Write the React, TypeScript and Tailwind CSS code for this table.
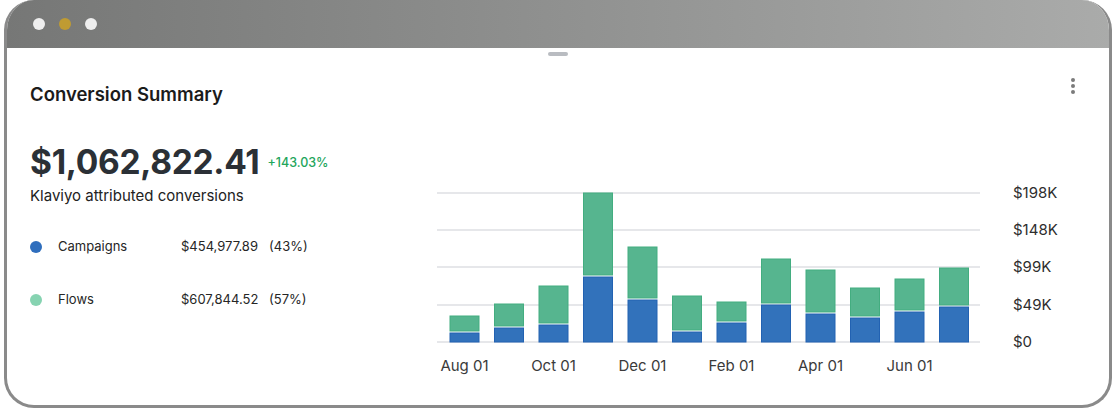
const bars = [
  { g: 135, b: 152 },
  { g: 123, b: 147 },
  { g: 105, b: 144 },
  { g: 12, b: 96 },
  { g: 66, b: 119 },
  { g: 115, b: 151 },
  { g: 121, b: 142 },
  { g: 78, b: 124 },
  { g: 89, b: 133 },
  { g: 107, b: 137 },
  { g: 98, b: 131 },
  { g: 87, b: 126 },
];

const grid = [12, 49, 86, 124, 161];
const yLabels = ["$198K", "$148K", "$99K", "$49K", "$0"];
const xLabels = ["Aug 01", "Oct 01", "Dec 01", "Feb 01", "Apr 01", "Jun 01"];

const BASE = 161;

function Chart() {
  return (
    <svg width="640" height="200" viewBox="0 0 640 200" className="block">
      {grid.map((y) => (
        <line key={y} x1="0" x2="543" y1={y} y2={y} stroke="#cdd0d5" strokeWidth="1.2" />
      ))}
      {bars.map((bar, i) => {
        const x = 13 + i * 44.5;
        return (
          <g key={i}>
            <rect x={x} y={bar.g} width="29" height={bar.b - 2 - bar.g} fill="#56b58f" stroke="#43ad80" strokeWidth="1" />
            <rect x={x} y={bar.b} width="29" height={BASE - bar.b} fill="#3272bb" stroke="#2262b2" strokeWidth="1" />
          </g>
        );
      })}
      {yLabels.map((t, i) => (
        <text key={t} x="576" y={grid[i] + 5} fontSize="15" fill="#2e2e2e" fontFamily="Inter, sans-serif">
          {t}
        </text>
      ))}
      {xLabels.map((t, i) => (
        <text key={t} x={27.5 + i * 89} y="190" fontSize="15" fill="#3a3a3a" textAnchor="middle" fontFamily="Inter, sans-serif">
          {t}
        </text>
      ))}
    </svg>
  );
}

function LegendRow({ color, label, amount, pct }: { color: string; label: string; amount: string; pct: string }) {
  return (
    <div className="flex items-center h-[20px] text-[13px] text-[#262626]">
      <span className={`w-[12px] h-[12px] rounded-full ${color}`} />
      <span className="ml-[16px] w-[123px]">{label}</span>
      <span className="w-[88px]">{amount}</span>
      <span>{pct}</span>
    </div>
  );
}

export default function App() {
  return (
    <div className="w-[1114px] h-[410px] bg-white" style={{ fontFamily: "Inter, 'Noto Sans', sans-serif" }}>
      <div className="ml-[4px] w-[1108px] h-[408px] rounded-[30px] border-[3px] border-t-0 border-[#8a8a8a] overflow-hidden flex flex-col bg-white">
        {/* Window bar */}
        <div className="h-[48px] -mx-[3px] bg-gradient-to-r from-[#767776] to-[#aaabaa] flex items-center pl-[29px] gap-[14px] shrink-0">
          <span className="w-[12px] h-[12px] rounded-full bg-[#eeeeee]" />
          <span className="w-[12px] h-[12px] rounded-full bg-[#bf9b32]" />
          <span className="w-[12px] h-[12px] rounded-full bg-[#eeeeee]" />
        </div>

        <div className="flex justify-center pt-[4px]">
          <div className="w-[20px] h-[4px] rounded-full bg-[#b9bcc1]" />
        </div>

        {/* Header */}
        <div className="flex items-start justify-between pl-[23px] pr-[33px] pt-[26px]">
          <h2 className="text-[18.5px] leading-[24px] font-semibold text-[#1b1b1b]">Conversion Summary</h2>
          <svg width="6" height="18" viewBox="0 0 6 18" className="mt-[-5px]">
            <circle cx="3" cy="3" r="2" fill="#7b7b7b" />
            <circle cx="3" cy="9" r="2" fill="#7b7b7b" />
            <circle cx="3" cy="15" r="2" fill="#7b7b7b" />
          </svg>
        </div>

        {/* Body */}
        <div className="flex">
          <div className="w-[430px] pl-[23px] pt-[36px]">
            <div className="flex items-center">
              <span className="text-[33.5px] leading-[40px] font-bold text-[#2b3036] tracking-[-0.3px]">$1,062,822.41</span>
              <span className="ml-[8px] mt-[2px] text-[12.5px] text-[#22a55b] font-medium">+143.03%</span>
            </div>
            <div className="mt-[4px] text-[15px] leading-[20px] text-[#222222]">Klaviyo attributed conversions</div>
            <div className="mt-[31px] flex flex-col gap-[33px]">
              <LegendRow color="bg-[#2f6ebd]" label="Campaigns" amount="$454,977.89" pct="(43%)" />
              <LegendRow color="bg-[#86d3b1]" label="Flows" amount="$607,844.52" pct="(57%)" />
            </div>
          </div>
          <div className="pt-[75px]">
            <Chart />
          </div>
        </div>
      </div>
    </div>
  );
}
